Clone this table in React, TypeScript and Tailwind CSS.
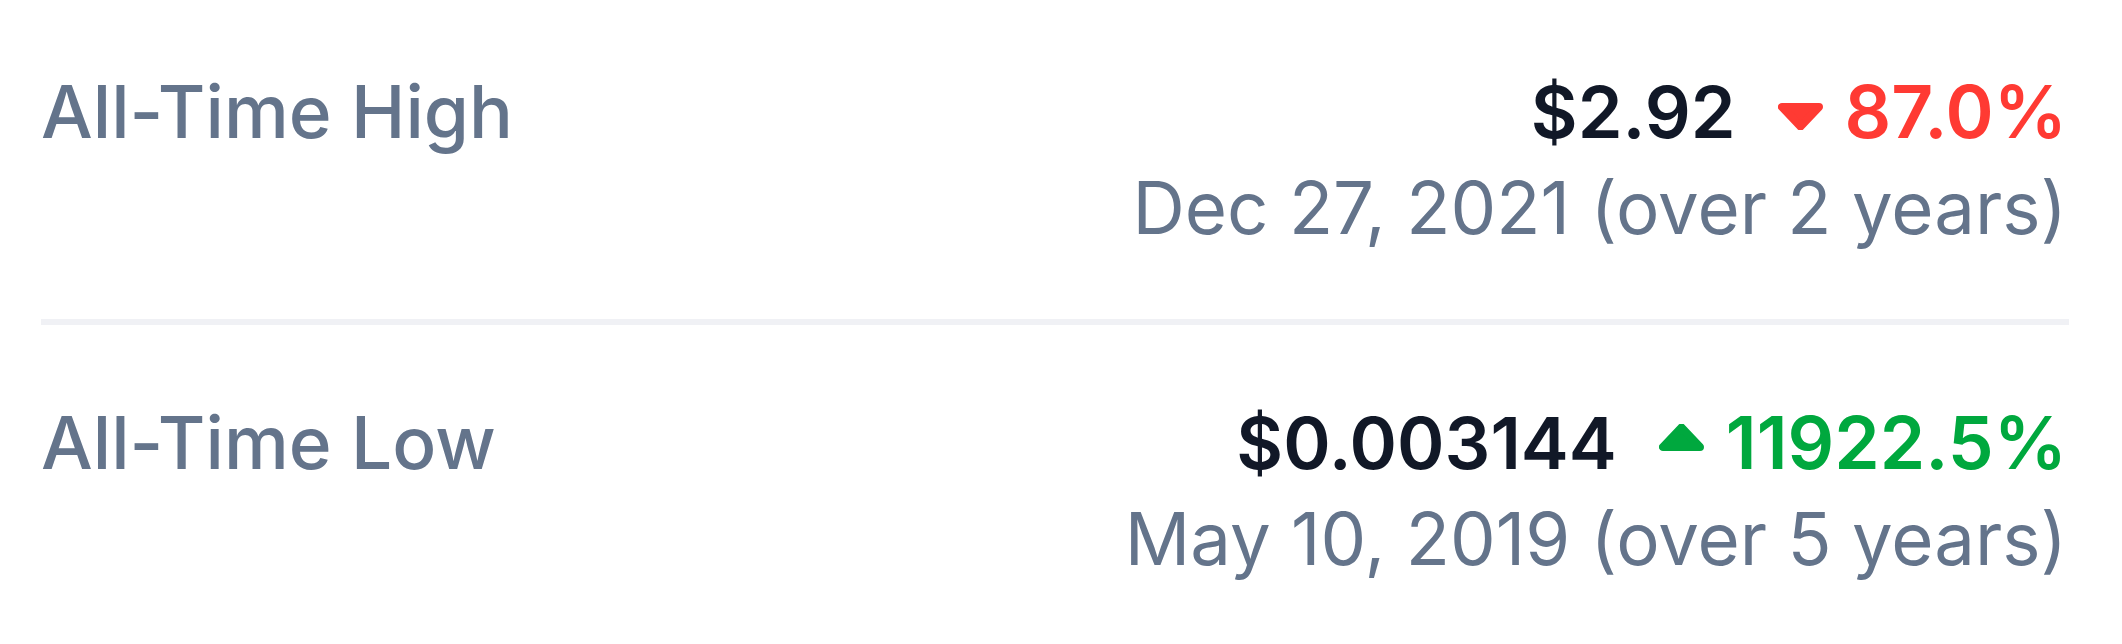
import React from "react";

function Caret({ up, color }: { up?: boolean; color: string }) {
  return (
    <svg width="45" height="27" viewBox="0 0 45 27" className={up ? "mb-[11px]" : "mt-[9px]"}>
      <polygon
        points={up ? "4,23 41,23 22.5,3.5" : "4,4 41,4 22.5,23.5"}
        fill={color}
        stroke={color}
        strokeWidth="8"
        strokeLinejoin="round"
      />
    </svg>
  );
}

function Row({
  label,
  price,
  pct,
  up,
  date,
  className,
}: {
  label: string;
  price: string;
  pct: string;
  up?: boolean;
  date: string;
  className: string;
}) {
  const color = up ? "#00a83e" : "#ff3a33";
  return (
    <div className={`flex items-start justify-between ${className}`}>
      <div className="text-[73px] leading-[96px] font-medium text-[#64748b]">{label}</div>
      <div className="flex flex-col items-end pr-[2px]">
        <div className="flex items-center text-[73px] leading-[96px]">
          <span className="font-semibold text-[72px] text-[#111827]">{price}</span>
          <span className="ml-[42px] mr-[22px] flex">
            <Caret up={up} color={color} />
          </span>
          <span className={`font-semibold ${up ? "text-[#00a83e]" : "text-[#ff3a33]"}`}>{pct}</span>
        </div>
        <div className="text-[72.5px] leading-[96px] text-[#64748b]">{date}</div>
      </div>
    </div>
  );
}

export default function App() {
  return (
    <div className="w-[2122px] h-[644px] bg-white pl-[41px] pr-[53px] font-['Inter',sans-serif] overflow-hidden">
      <Row
        label="All-Time High"
        price="$2.92"
        pct="87.0%"
        date="Dec 27, 2021 (over 2 years)"
        className="pt-[64px] pb-[63px] border-b-[6px] border-[#f0f1f5]"
      />
      <Row
        label="All-Time Low"
        price="$0.003144"
        pct="11922.5%"
        up
        date="May 10, 2019 (over 5 years)"
        className="pt-[70px]"
      />
    </div>
  );
}
